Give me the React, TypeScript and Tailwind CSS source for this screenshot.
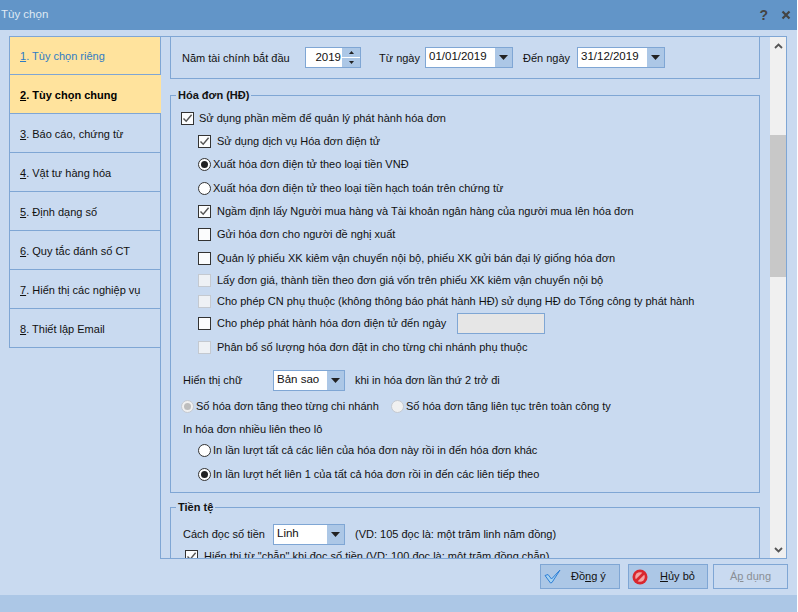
import React from "react";

function Check({ checked, disabled }: { checked?: boolean; disabled?: boolean }) {
  return (
    <span
      className={
        disabled
          ? "w-[13px] h-[13px] shrink-0 border border-[#c4c9d0] bg-[#eef1f5] flex items-center justify-center"
          : "w-[13px] h-[13px] shrink-0 border border-[#333333] bg-[#fbfcfd] flex items-center justify-center"
      }
    >
      {checked && (
        <svg width="11" height="11" viewBox="0 0 11 11">
          <path d="M1.5 5.5 L4.2 8.3 L9.6 1.8" fill="none" stroke="#555555" strokeWidth="1.4" />
        </svg>
      )}
    </span>
  );
}

function Radio({ checked, disabled }: { checked?: boolean; disabled?: boolean }) {
  return (
    <span
      className={
        disabled
          ? "w-[13px] h-[13px] shrink-0 rounded-full border border-[#c4c9d0] bg-[#f0f0f0] flex items-center justify-center"
          : "w-[13px] h-[13px] shrink-0 rounded-full border border-[#333333] bg-white flex items-center justify-center"
      }
    >
      {checked && (
        <span className={disabled ? "w-[7px] h-[7px] rounded-full bg-[#bdbdbd]" : "w-[7px] h-[7px] rounded-full bg-[#222222]"} />
      )}
    </span>
  );
}

function Caret() {
  return (
    <svg width="9" height="5" viewBox="0 0 9 5">
      <path d="M0 0 H9 L4.5 5 Z" fill="#222222" />
    </svg>
  );
}

function Combo({ text, w }: { text: string; w: string }) {
  return (
    <div className={`${w} h-[21px] shrink-0 border border-[#7fa6d4] bg-white flex items-stretch`}>
      <span className="flex-1 pl-[3px] leading-[17px] text-[11.5px] text-[#111]">{text}</span>
      <span className="w-[17px] bg-[#acc7e6] flex items-center justify-center">
        <Caret />
      </span>
    </div>
  );
}

function Row({ cls, children }: { cls: string; children: React.ReactNode }) {
  return <div className={`flex items-center h-[20px] whitespace-nowrap ${cls}`}>{children}</div>;
}

const nav = [
  ["1", ". Tùy chọn riêng"],
  ["2", ". Tùy chọn chung"],
  ["3", ". Báo cáo, chứng từ"],
  ["4", ". Vật tư hàng hóa"],
  ["5", ". Định dạng số"],
  ["6", ". Quy tắc đánh số CT"],
  ["7", ". Hiển thị các nghiệp vụ"],
  ["8", ". Thiết lập Email"],
];

export default function App() {
  return (
    <div className="w-[797px] h-[612px] bg-[#c9daf0] flex flex-col overflow-hidden text-[11px] text-[#111] font-['Liberation_Sans',Arial,sans-serif]">
      {/* Title bar */}
      <div className="h-[30px] shrink-0 bg-[#6295c8] flex items-center pl-[1px] pr-[6px]">
        <span className="text-[11.5px] text-[#dfe9f4]">Tùy chọn</span>
        <span className="ml-auto font-bold text-[14px] text-[#444]">?</span>
        <svg className="ml-[13px]" width="10" height="10" viewBox="0 0 10 10">
          <path d="M1.5 1.5 L8.5 8.5 M8.5 1.5 L1.5 8.5" stroke="#444" strokeWidth="2.2" fill="none" />
        </svg>
      </div>

      {/* Main */}
      <div className="flex pl-[9px] pr-[10px] pt-[6px] shrink-0">
        <div className="w-[151px] shrink-0">
          {nav.map(([n, label], i) => (
            <div
              key={n}
              className={
                i === 0
                  ? "h-[39px] border-l border-t border-b border-[#7fa6d4] bg-[#ffe39d] pl-[10px] pt-[1px] flex items-center text-[#2f7cc4]"
                  : i === 1
                  ? "h-[39px] w-[152px] relative z-10 border-l border-b border-[#7fa6d4] bg-[#ffe39d] pl-[10px] pt-[2px] flex items-center font-bold text-black"
                  : "h-[39px] border-l border-b border-[#7fa6d4] pl-[10px] pt-[2px] flex items-center"
              }
            >
              <span>
                <u>{n}</u>
                {label}
              </span>
            </div>
          ))}
        </div>

        <div className="w-[627px] h-[523px] shrink-0 border border-[#7fa6d4] flex overflow-hidden">
          <div className="w-[609px] shrink-0 overflow-hidden pl-[9px]">
            {/* Fiscal year */}
            <div className="w-[590px] h-[42px] border-l border-r border-b border-[#7fa6d4] flex items-center pl-[11px] whitespace-nowrap">
              <span className="w-[123px] pt-[1px]">Năm tài chính bắt đầu</span>
              <div className="w-[56px] h-[21px] border border-[#7fa6d4] bg-white flex">
                <span className="flex-1 text-right pr-[1px] leading-[18px] text-[11.5px]">2019</span>
                <div className="w-[18px] flex flex-col">
                  <span className="h-[9px] bg-[#acc7e6] flex items-center justify-center">
                    <svg width="5" height="3" viewBox="0 0 5 3"><path d="M2.5 0 L5 3 H0 Z" fill="#222" /></svg>
                  </span>
                  <span className="h-[1px] bg-white" />
                  <span className="flex-1 bg-[#acc7e6] flex items-center justify-center">
                    <svg width="5" height="3" viewBox="0 0 5 3"><path d="M0 0 H5 L2.5 3 Z" fill="#222" /></svg>
                  </span>
                </div>
              </div>
              <span className="ml-[18px] w-[46px] pt-[1px]">Từ ngày</span>
              <Combo text="01/01/2019" w="w-[88px]" />
              <span className="ml-[10px] w-[54px] pt-[1px]">Đến ngày</span>
              <Combo text="31/12/2019" w="w-[88px]" />
            </div>

            {/* Hoa don */}
            <div className="relative mt-[16px] w-[590px] h-[398px] border border-[#7fa6d4] pt-[12px] pl-[10px]">
              <span className="absolute -top-[8px] left-[5px] px-[2px] bg-[#c9daf0] font-bold leading-[14px] whitespace-nowrap">Hóa đơn (HĐ)</span>
              <Row cls="gap-[5px]"><Check checked /><span>Sử dụng phần mềm để quản lý phát hành hóa đơn</span></Row>
              <Row cls="mt-[3px] ml-[17px] gap-[6px]"><Check checked /><span>Sử dụng dịch vụ Hóa đơn điện tử</span></Row>
              <Row cls="mt-[3px] ml-[17px] gap-[2px]"><Radio checked /><span>Xuất hóa đơn điện tử theo loại tiền VNĐ</span></Row>
              <Row cls="mt-[4px] ml-[17px] gap-[2px]"><Radio /><span>Xuất hóa đơn điện tử theo loại tiền hạch toán trên chứng từ</span></Row>
              <Row cls="mt-[3px] ml-[17px] gap-[6px]"><Check checked /><span>Ngầm định lấy Người mua hàng và Tài khoản ngân hàng của người mua lên hóa đơn</span></Row>
              <Row cls="mt-[3px] ml-[17px] gap-[6px]"><Check /><span>Gửi hóa đơn cho người đề nghị xuất</span></Row>
              <Row cls="mt-[4px] ml-[17px] gap-[6px]"><Check /><span>Quản lý phiếu XK kiêm vận chuyển nội bộ, phiếu XK gửi bán đại lý giống hóa đơn</span></Row>
              <Row cls="mt-[2px] ml-[17px] gap-[6px]"><Check disabled /><span>Lấy đơn giá, thành tiền theo đơn giá vốn trên phiếu XK kiêm vận chuyển nội bộ</span></Row>
              <Row cls="mt-[1px] ml-[17px] gap-[6px]"><Check disabled /><span>Cho phép CN phụ thuộc (không thông báo phát hành HĐ) sử dụng HĐ do Tổng công ty phát hành</span></Row>
              <Row cls="mt-[2px] ml-[17px] gap-[6px]">
                <Check />
                <span className="w-[234px]">Cho phép phát hành hóa đơn điện tử đến ngày</span>
                <span className="w-[88px] h-[21px] border border-[#7fa6d4] bg-[#e6e6e6]" />
              </Row>
              <Row cls="mt-[4px] ml-[17px] gap-[6px]"><Check disabled /><span>Phân bổ số lượng hóa đơn đặt in cho từng chi nhánh phụ thuộc</span></Row>
              <Row cls="mt-[13px] ml-[2px]">
                <span className="w-[90px]">Hiển thị chữ</span>
                <Combo text="Bản sao" w="w-[72px]" />
                <span className="ml-[10px]">khi in hóa đơn lần thứ 2 trở đi</span>
              </Row>
              <Row cls="mt-[6px]">
                <Radio checked disabled />
                <span className="ml-[2px] w-[195px]">Số hóa đơn tăng theo từng chi nhánh</span>
                <Radio disabled />
                <span className="ml-[2px]">Số hóa đơn tăng liên tục trên toàn công ty</span>
              </Row>
              <Row cls="mt-[3px] ml-[2px]"><span>In hóa đơn nhiều liên theo lô</span></Row>
              <Row cls="mt-[1px] ml-[17px] gap-[2px]"><Radio /><span>In lần lượt tất cả các liên của hóa đơn này rồi in đến hóa đơn khác</span></Row>
              <Row cls="mt-[4px] ml-[17px] gap-[2px]"><Radio checked /><span>In lần lượt hết liên 1 của tất cả hóa đơn rồi in đến các liên tiếp theo</span></Row>
            </div>

            {/* Tien te */}
            <div className="relative mt-[14px] w-[590px] h-[80px] border border-[#7fa6d4] pt-[16px] pl-[12px]">
              <span className="absolute -top-[8px] left-[5px] px-[2px] bg-[#c9daf0] font-bold leading-[14px] whitespace-nowrap">Tiền tệ</span>
              <Row cls="">
                <span className="w-[90px]">Cách đọc số tiền</span>
                <Combo text="Linh" w="w-[72px]" />
                <span className="ml-[10px]">(VD: 105 đọc là: một trăm linh năm đồng)</span>
              </Row>
              <Row cls="mt-[2px] ml-[2px] gap-[6px]"><Check checked /><span>Hiển thị từ "chẵn" khi đọc số tiền (VD: 100 đọc là: một trăm đồng chẵn)</span></Row>
            </div>
          </div>

          {/* Scrollbar */}
          <div className="w-[16px] ml-auto shrink-0 bg-[#f0f0f0] flex flex-col items-center">
            <div className="h-[17px] flex items-center justify-center">
              <svg width="9" height="6" viewBox="0 0 9 6"><path d="M1 5 L4.5 1.5 L8 5" fill="none" stroke="#555" strokeWidth="1.8" /></svg>
            </div>
            <div className="mt-[81px] w-full h-[142px] bg-[#c8c8c8]" />
            <div className="mt-auto h-[17px] flex items-center justify-center">
              <svg width="9" height="6" viewBox="0 0 9 6"><path d="M1 1 L4.5 4.5 L8 1" fill="none" stroke="#555" strokeWidth="1.8" /></svg>
            </div>
          </div>
        </div>
      </div>

      {/* Footer */}
      <div className="h-[36px] shrink-0 flex justify-end pt-[5px] pr-[9px]">
        <button className="w-[80px] h-[25px] border border-[#7fa6d4] bg-[#acc7e6] flex items-center pl-[3px]">
          <svg width="17" height="15" viewBox="0 0 17 15">
            <path d="M1 6.5 L4 5.5 L7.5 10 L16 1 L8 13.5 L6.5 14 Z" fill="#a6d2f2" stroke="#2e7fd6" strokeWidth="1" />
          </svg>
          <span className="ml-[10px]">Đồ<u>n</u>g ý</span>
        </button>
        <button className="ml-[8px] w-[80px] h-[25px] border border-[#7fa6d4] bg-[#acc7e6] flex items-center pl-[3px]">
          <svg width="16" height="16" viewBox="0 0 16 16">
            <circle cx="8" cy="8" r="7.5" fill="#d9272e" />
            <circle cx="8" cy="8" r="4.8" fill="#f3a3a3" />
            <path d="M3.5 12.5 L12.5 3.5" stroke="#d9272e" strokeWidth="2.6" />
          </svg>
          <span className="ml-[12px]"><u>H</u>ủy bỏ</span>
        </button>
        <button className="ml-[5px] w-[75px] h-[25px] border border-[#7fa6d4] flex items-center justify-center text-[#8a8f96]">
          <span>Á<u>p</u> dụng</span>
        </button>
      </div>

      <div className="flex-1 bg-[#acc7e6]" />
    </div>
  );
}
